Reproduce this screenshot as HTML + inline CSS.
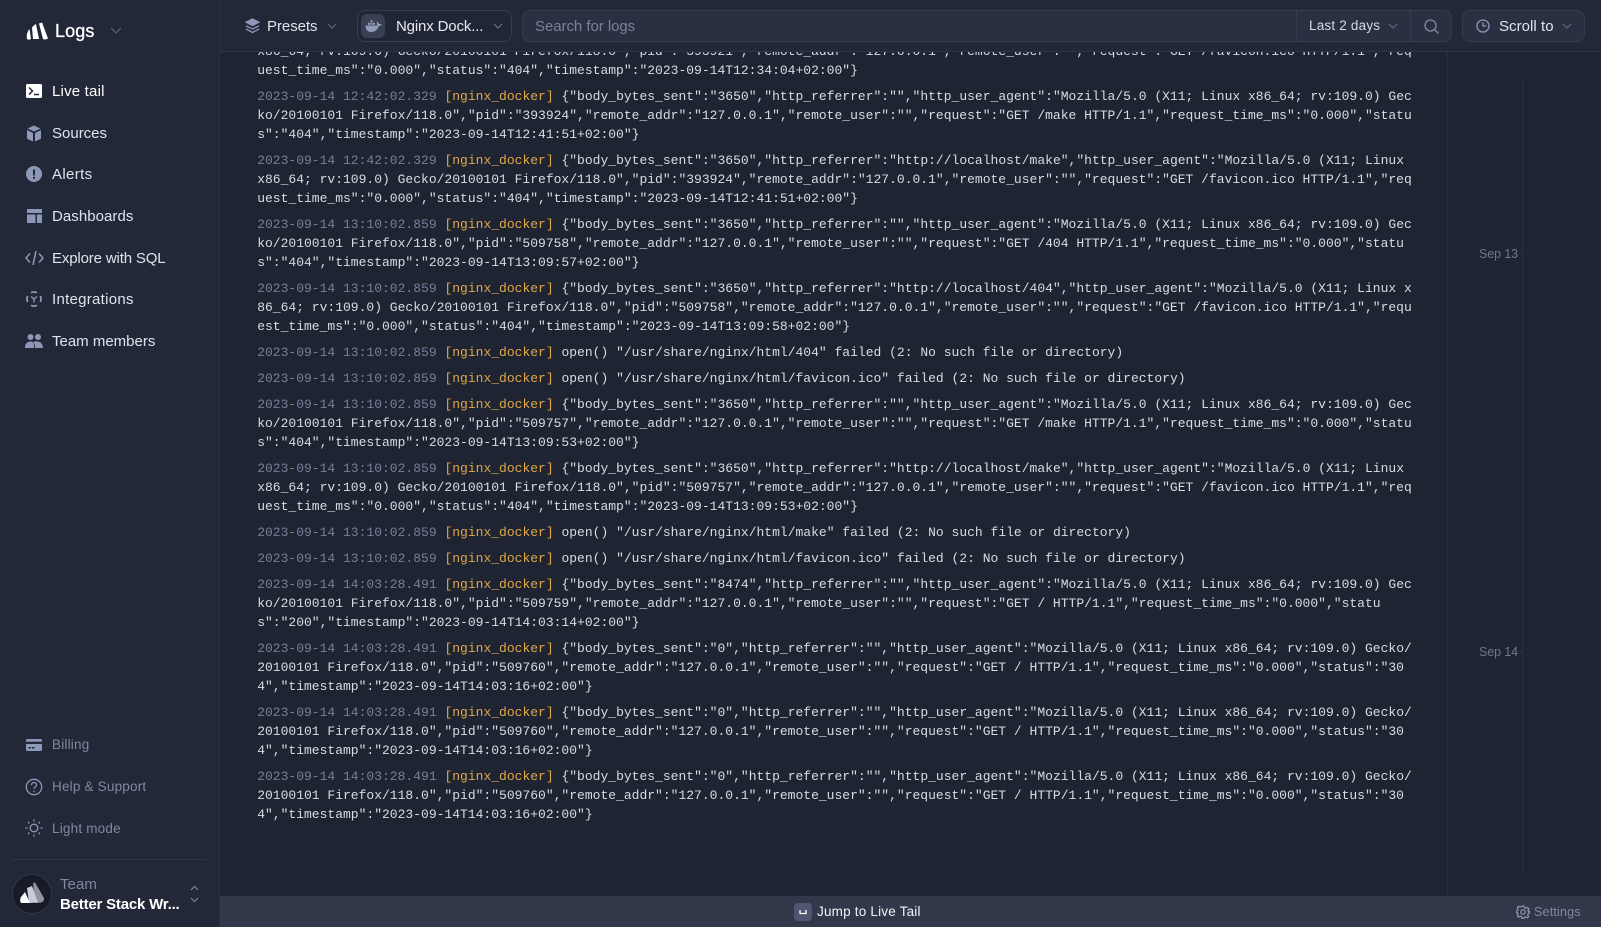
<!DOCTYPE html>
<html><head><meta charset="utf-8"><style>
*{box-sizing:border-box}
html,body{margin:0;padding:0;width:1601px;height:927px;overflow:hidden;background:#1f2432;font-family:"Liberation Sans",sans-serif}
.a{position:absolute;white-space:nowrap}
#side{position:absolute;left:0;top:0;width:220px;height:927px;background:#232838;border-right:1px solid #2b3142}
#head{position:absolute;left:220px;top:0;width:1381px;height:52px;background:#232838;border-bottom:1px solid #2e3445;z-index:3}
#log{position:absolute;left:257.2px;top:42px;font:13px/19px "Liberation Mono",monospace;color:#d8dce5;white-space:pre}
.e{margin-bottom:7px}
.t{color:#767f99}.n{color:#dfa64c}
.nav{position:absolute;left:52px;font-size:15px;line-height:20px;color:#dfe3ec;white-space:nowrap}
.sub{position:absolute;left:52px;font-size:13.5px;line-height:20px;color:#7f88a3;letter-spacing:.2px;white-space:nowrap}
svg{position:absolute;display:block}
.box{position:absolute;top:10px;height:32px;border:1px solid #353c50;border-radius:8px}
</style></head><body>
<div id="side">
<svg style="left:26px;top:21px" width="24" height="20" viewBox="0 0 24 20" fill="#fff"><path d="M1 18c-.8-4 .4-7.500 2.500-10l1.500 10c-1.500.8-3 .8-4 0z"/><path d="M7 18L6 6.500c1-1.500 2.500-2.500 4-3.500l3 15z" /><path d="M13 2.500l3-1 6 16c-1.500 1-3.500 1.300-5 .5z"/></svg>
<div class="a" style="left:55px;top:19px;font-size:18px;line-height:24px;color:#fff;letter-spacing:.1px;-webkit-text-stroke:.3px #fff">Logs</div>
<svg style="left:110px;top:26px" width="12" height="10" viewBox="0 0 12 10" fill="none" stroke="#565e75" stroke-width="1.300"><path d="M1 2l5 5 5-5"/></svg>

<svg style="left:26px;top:84px" width="16" height="14" viewBox="0 0 16 14"><rect width="16" height="14" rx="1.500" fill="#fff"/><path d="M3 3.500l3.500 3.500L3 10.500" fill="none" stroke="#232838" stroke-width="1.500"/><path d="M8 10.500h5" stroke="#232838" stroke-width="1.500"/></svg>
<div class="nav" style="top:82px;color:#fff;letter-spacing:.2px">Live tail</div>
<svg style="left:26px;top:125px" width="16" height="17" viewBox="0 0 16 17" fill="#8d98b8"><path d="M8 0.500l6.500 3L8 6.500 1.500 3.500z"/><path d="M1 5l6 3v8.500l-5-2.200c-.6-.3-1-.8-1-1.500z"/><path d="M15 5l-6 3v8.500l5-2.200c.6-.3 1-.8 1-1.500z"/></svg>
<div class="nav" style="top:124px;letter-spacing:0">Sources</div>
<svg style="left:26px;top:166px" width="16" height="16" viewBox="0 0 16 16"><circle cx="8" cy="8" r="8" fill="#8d98b8"/><rect x="7" y="3.500" width="2" height="6" fill="#232838"/><rect x="7" y="10.800" width="2" height="2" fill="#232838"/></svg>
<div class="nav" style="top:165px;letter-spacing:.35px">Alerts</div>
<svg style="left:27px;top:209px" width="15" height="14" viewBox="0 0 15 14" fill="#8d98b8"><rect width="15" height="4"/><rect y="5.500" width="8.500" height="8.500"/><rect x="10" y="5.500" width="5" height="8.500"/></svg>
<div class="nav" style="top:207px;letter-spacing:.05px">Dashboards</div>
<svg style="left:25px;top:250px" width="19" height="16" viewBox="0 0 19 16" fill="none" stroke="#8d98b8" stroke-width="1.500"><path d="M5 3.500L1 8l4 4.500M14 3.500L18 8l-4 4.500M11 1L8 15"/></svg>
<div class="nav" style="top:249px;letter-spacing:-.15px">Explore with SQL</div>
<svg style="left:26px;top:291px" width="16" height="16" viewBox="0 0 16 16" fill="none" stroke="#8d98b8" stroke-width="1.800"><path d="M5.040 1.660A7 7 0 0 1 10.960 1.660M14.340 5.040A7 7 0 0 1 14.340 10.960M10.960 14.340A7 7 0 0 1 5.040 14.340M1.660 10.960A7 7 0 0 1 1.660 5.040"/><path d="M5 5.500l3 2.500 3-2.500M8 8v3.500" stroke-width="1.400"/></svg>
<div class="nav" style="top:290px;letter-spacing:.28px">Integrations</div>
<svg style="left:25px;top:334px" width="18" height="14" viewBox="0 0 18 14" fill="#8d98b8"><circle cx="5.500" cy="3" r="3"/><circle cx="13" cy="3" r="3"/><path d="M0 14c0-4 2-6.500 5.500-6.500S9 10 9 14z"/><path d="M10 14c0-2.500-.5-4.500-1.800-6 1.300-.5 3-.8 4.800-.5 3 .4 5 3 5 6.500z"/></svg>
<div class="nav" style="top:332px;letter-spacing:0">Team members</div>

<svg style="left:26px;top:739px" width="16" height="12" viewBox="0 0 16 12"><rect width="16" height="12" rx="1.500" fill="#8d98b8"/><rect y="2.700" width="16" height="2.300" fill="#232838"/><rect x="2.500" y="8" width="2.500" height="1.500" fill="#232838"/><rect x="6" y="8" width="2.500" height="1.500" fill="#232838"/></svg>
<div class="sub" style="top:735px">Billing</div>
<svg style="left:25px;top:778px" width="18" height="18" viewBox="0 0 18 18" fill="none" stroke="#8d98b8" stroke-width="1.300"><circle cx="9" cy="9" r="7.700"/><path d="M6.500 7c0-1.500 1.100-2.500 2.500-2.500S11.500 5.500 11.500 7c0 1.800-2.500 2-2.500 3.800"/><path d="M9 12.500v1.300"/></svg>
<div class="sub" style="top:777px">Help &amp; Support</div>
<svg style="left:25px;top:819px" width="18" height="18" viewBox="0 0 18 18" fill="none" stroke="#8d98b8" stroke-width="1.300"><circle cx="9" cy="9" r="3.800"/><path d="M9 .5v2M9 15.500v2M.5 9h2M15.500 9h2M3 3l1.400 1.400M13.600 13.600L15 15M3 15l1.400-1.400M13.600 4.400L15 3"/></svg>
<div class="sub" style="top:819px">Light mode</div>

<div style="position:absolute;left:12px;top:859px;width:195px;height:1px;background:#2e3445"></div>
<svg style="left:12px;top:874px" width="40" height="40" viewBox="0 0 40 40"><circle cx="20" cy="20" r="19.500" fill="#171b28" stroke="#30364a"/><path d="M21 9l2-.5 9 15.500c.5 2-1 4-3 4.500l-6 .5z" fill="#8f94a3"/><path d="M15 14l5-2 6 16.500-9 .5z" fill="#c9ccd6"/><path d="M9 23l4-5 5 11H10c-2 0-2.500-3-1-6z" fill="#fff"/></svg>
<div class="a" style="left:60px;top:875px;font-size:15px;line-height:20px;color:#7f88a3;letter-spacing:.05px">Team</div>
<div class="a" style="left:60px;top:895px;font-size:15px;line-height:20px;color:#fff;font-weight:700;letter-spacing:-.2px">Better Stack Wr...</div>
<svg style="left:190px;top:885px" width="9" height="18" viewBox="0 0 9 18" fill="none" stroke="#7f88a3" stroke-width="1.100"><path d="M1 5l3.500-3.500L8 5M1 13l3.500 3.500L8 13"/></svg>
</div>

<div id="log"><div class="e">x86_64; rv:109.0) Gecko/20100101 Firefox/118.0","pid":"393921","remote_addr":"127.0.0.1","remote_user":"","request":"GET /favicon.ico HTTP/1.1","req
uest_time_ms":"0.000","status":"404","timestamp":"2023-09-14T12:34:04+02:00"}</div><div class="e"><span class="t">2023-09-14 12:42:02.329</span> <span class="n">[nginx_docker]</span> {"body_bytes_sent":"3650","http_referrer":"","http_user_agent":"Mozilla/5.0 (X11; Linux x86_64; rv:109.0) Gec
ko/20100101 Firefox/118.0","pid":"393924","remote_addr":"127.0.0.1","remote_user":"","request":"GET /make HTTP/1.1","request_time_ms":"0.000","statu
s":"404","timestamp":"2023-09-14T12:41:51+02:00"}</div><div class="e"><span class="t">2023-09-14 12:42:02.329</span> <span class="n">[nginx_docker]</span> {"body_bytes_sent":"3650","http_referrer":"http://localhost/make","http_user_agent":"Mozilla/5.0 (X11; Linux
x86_64; rv:109.0) Gecko/20100101 Firefox/118.0","pid":"393924","remote_addr":"127.0.0.1","remote_user":"","request":"GET /favicon.ico HTTP/1.1","req
uest_time_ms":"0.000","status":"404","timestamp":"2023-09-14T12:41:51+02:00"}</div><div class="e"><span class="t">2023-09-14 13:10:02.859</span> <span class="n">[nginx_docker]</span> {"body_bytes_sent":"3650","http_referrer":"","http_user_agent":"Mozilla/5.0 (X11; Linux x86_64; rv:109.0) Gec
ko/20100101 Firefox/118.0","pid":"509758","remote_addr":"127.0.0.1","remote_user":"","request":"GET /404 HTTP/1.1","request_time_ms":"0.000","statu
s":"404","timestamp":"2023-09-14T13:09:57+02:00"}</div><div class="e"><span class="t">2023-09-14 13:10:02.859</span> <span class="n">[nginx_docker]</span> {"body_bytes_sent":"3650","http_referrer":"http://localhost/404","http_user_agent":"Mozilla/5.0 (X11; Linux x
86_64; rv:109.0) Gecko/20100101 Firefox/118.0","pid":"509758","remote_addr":"127.0.0.1","remote_user":"","request":"GET /favicon.ico HTTP/1.1","requ
est_time_ms":"0.000","status":"404","timestamp":"2023-09-14T13:09:58+02:00"}</div><div class="e"><span class="t">2023-09-14 13:10:02.859</span> <span class="n">[nginx_docker]</span> open() "/usr/share/nginx/html/404" failed (2: No such file or directory)</div><div class="e"><span class="t">2023-09-14 13:10:02.859</span> <span class="n">[nginx_docker]</span> open() "/usr/share/nginx/html/favicon.ico" failed (2: No such file or directory)</div><div class="e"><span class="t">2023-09-14 13:10:02.859</span> <span class="n">[nginx_docker]</span> {"body_bytes_sent":"3650","http_referrer":"","http_user_agent":"Mozilla/5.0 (X11; Linux x86_64; rv:109.0) Gec
ko/20100101 Firefox/118.0","pid":"509757","remote_addr":"127.0.0.1","remote_user":"","request":"GET /make HTTP/1.1","request_time_ms":"0.000","statu
s":"404","timestamp":"2023-09-14T13:09:53+02:00"}</div><div class="e"><span class="t">2023-09-14 13:10:02.859</span> <span class="n">[nginx_docker]</span> {"body_bytes_sent":"3650","http_referrer":"http://localhost/make","http_user_agent":"Mozilla/5.0 (X11; Linux
x86_64; rv:109.0) Gecko/20100101 Firefox/118.0","pid":"509757","remote_addr":"127.0.0.1","remote_user":"","request":"GET /favicon.ico HTTP/1.1","req
uest_time_ms":"0.000","status":"404","timestamp":"2023-09-14T13:09:53+02:00"}</div><div class="e"><span class="t">2023-09-14 13:10:02.859</span> <span class="n">[nginx_docker]</span> open() "/usr/share/nginx/html/make" failed (2: No such file or directory)</div><div class="e"><span class="t">2023-09-14 13:10:02.859</span> <span class="n">[nginx_docker]</span> open() "/usr/share/nginx/html/favicon.ico" failed (2: No such file or directory)</div><div class="e"><span class="t">2023-09-14 14:03:28.491</span> <span class="n">[nginx_docker]</span> {"body_bytes_sent":"8474","http_referrer":"","http_user_agent":"Mozilla/5.0 (X11; Linux x86_64; rv:109.0) Gec
ko/20100101 Firefox/118.0","pid":"509759","remote_addr":"127.0.0.1","remote_user":"","request":"GET / HTTP/1.1","request_time_ms":"0.000","statu
s":"200","timestamp":"2023-09-14T14:03:14+02:00"}</div><div class="e"><span class="t">2023-09-14 14:03:28.491</span> <span class="n">[nginx_docker]</span> {"body_bytes_sent":"0","http_referrer":"","http_user_agent":"Mozilla/5.0 (X11; Linux x86_64; rv:109.0) Gecko/
20100101 Firefox/118.0","pid":"509760","remote_addr":"127.0.0.1","remote_user":"","request":"GET / HTTP/1.1","request_time_ms":"0.000","status":"30
4","timestamp":"2023-09-14T14:03:16+02:00"}</div><div class="e"><span class="t">2023-09-14 14:03:28.491</span> <span class="n">[nginx_docker]</span> {"body_bytes_sent":"0","http_referrer":"","http_user_agent":"Mozilla/5.0 (X11; Linux x86_64; rv:109.0) Gecko/
20100101 Firefox/118.0","pid":"509760","remote_addr":"127.0.0.1","remote_user":"","request":"GET / HTTP/1.1","request_time_ms":"0.000","status":"30
4","timestamp":"2023-09-14T14:03:16+02:00"}</div><div class="e"><span class="t">2023-09-14 14:03:28.491</span> <span class="n">[nginx_docker]</span> {"body_bytes_sent":"0","http_referrer":"","http_user_agent":"Mozilla/5.0 (X11; Linux x86_64; rv:109.0) Gecko/
20100101 Firefox/118.0","pid":"509760","remote_addr":"127.0.0.1","remote_user":"","request":"GET / HTTP/1.1","request_time_ms":"0.000","status":"30
4","timestamp":"2023-09-14T14:03:16+02:00"}</div></div>

<div style="position:absolute;left:1447px;top:52px;width:1px;height:844px;background:#2a3040"></div>
<div style="position:absolute;left:1522px;top:76px;width:1px;height:796px;background:#2a3040"></div>
<div class="a" style="left:1479px;top:245px;font-size:12.500px;line-height:18px;color:#6f7893;letter-spacing:-.1px">Sep 13</div>
<div style="position:absolute;left:1519px;top:253px;width:3px;height:1px;background:#2f3546"></div>
<div class="a" style="left:1479px;top:643px;font-size:12.500px;line-height:18px;color:#6f7893;letter-spacing:-.1px">Sep 14</div>
<div style="position:absolute;left:1519px;top:651px;width:3px;height:1px;background:#2f3546"></div>

<div id="head"></div>
<div style="position:absolute;left:0;top:0;width:1601px;height:52px;z-index:4">
<svg style="left:245px;top:18px" width="15" height="16" viewBox="0 0 15 16" fill="none" stroke="#8d98b8" stroke-width="1.300"><path d="M7.500 1L14 4.200 7.500 7.500 1 4.200z" fill="#8d98b8"/><path d="M1 7.800l6.500 3.200L14 7.800M1 11l6.500 3.500L14 11"/></svg>
<div class="a" style="left:267px;top:17px;font-size:15px;line-height:20px;color:#dfe3ec;letter-spacing:-.05px">Presets</div>
<svg style="left:327px;top:23px" width="10" height="7" viewBox="0 0 10 7" fill="none" stroke="#5f677e" stroke-width="1.200"><path d="M1 1l4 4 4-4"/></svg>

<div class="box" style="left:357px;width:155px;background:#212636"></div>
<div style="position:absolute;left:361px;top:14px;width:24px;height:24px;border-radius:6px;background:#3a4054"></div>
<svg style="left:365px;top:19px" width="17" height="14" viewBox="0 0 17 14" fill="#929dbb"><path d="M0.500 6.500h11.500c.3-1 .2-2-.5-3l1-.7c.8.600 1.300 1.400 1.400 2.300.8-.3 1.700-.2 2.600.300-.5 1.200-1.500 1.700-2.800 1.700C12.700 10.500 10 13 6 13 2.500 13 .6 10.500.5 6.500z"/><rect x="3" y="3.800" width="2" height="2"/><rect x="5.500" y="3.800" width="2" height="2"/><rect x="8" y="3.800" width="2" height="2"/><rect x="5.500" y="1.200" width="2" height="2"/></svg>
<div class="a" style="left:396px;top:17px;font-size:15px;line-height:20px;color:#e6e9f0;letter-spacing:-.15px">Nginx Dock...</div>
<svg style="left:493px;top:23px" width="10" height="7" viewBox="0 0 10 7" fill="none" stroke="#6a7289" stroke-width="1.200"><path d="M1 1l4 4 4-4"/></svg>

<div class="box" style="left:522px;width:930px;background:#2a3041"></div>
<div class="a" style="left:535px;top:17px;font-size:15px;line-height:20px;color:#78819c;letter-spacing:-.05px">Search for logs</div>
<div style="position:absolute;left:1296px;top:10px;width:1px;height:32px;background:#353c50"></div>
<div style="position:absolute;left:1410px;top:10px;width:1px;height:32px;background:#353c50"></div>
<div class="a" style="left:1309px;top:16px;font-size:13.500px;line-height:20px;color:#d5d9e2;letter-spacing:.2px">Last 2 days</div>
<svg style="left:1388px;top:23px" width="10" height="7" viewBox="0 0 10 7" fill="none" stroke="#5f677e" stroke-width="1.200"><path d="M1 1l4 4 4-4"/></svg>
<svg style="left:1424px;top:19px" width="15" height="15" viewBox="0 0 15 15" fill="none" stroke="#7f88a3" stroke-width="1.300"><circle cx="6.500" cy="6.500" r="5.500"/><path d="M10.500 10.500L14.500 14.500"/></svg>

<div class="box" style="left:1462px;width:123px;background:#2a3041"></div>
<svg style="left:1476px;top:19px" width="14" height="14" viewBox="0 0 14 14" fill="none" stroke="#8d98b8" stroke-width="1.300"><circle cx="7" cy="7" r="6"/><path d="M7 3.200V7h3.300"/></svg>
<div class="a" style="left:1499px;top:17px;font-size:15px;line-height:20px;color:#dfe3ec;letter-spacing:.05px">Scroll to</div>
<svg style="left:1562px;top:23px" width="10" height="7" viewBox="0 0 10 7" fill="none" stroke="#5f677e" stroke-width="1.200"><path d="M1 1l4 4 4-4"/></svg>
</div>

<div style="position:absolute;left:220px;top:896px;width:1381px;height:31px;background:#323849"></div>
<div style="position:absolute;left:794px;top:903px;width:18px;height:18px;border-radius:4px;background:#4f5770"></div>
<svg style="left:799px;top:909px" width="8" height="6" viewBox="0 0 8 6" fill="none" stroke="#fff" stroke-width="1.300"><path d="M1 1v3.500h6V1"/></svg>
<div class="a" style="left:817px;top:902px;font-size:13.500px;line-height:20px;color:#f0f2f6;letter-spacing:.2px">Jump to Live Tail</div>
<svg style="left:1516px;top:905px" width="14" height="14" viewBox="0 0 14 14" fill="none" stroke="#8d98b8" stroke-width="1.200"><circle cx="7" cy="7" r="2.200"/><path d="M6 1h2l.4 1.700 1.500.6 1.500-.9 1.400 1.400-.9 1.500.6 1.500L14 6v2l-1.700.4-.6 1.500.9 1.500-1.400 1.400-1.500-.9-1.500.6L8 13.500H6l-.4-1.700-1.500-.6-1.500.9-1.400-1.400.9-1.500-.6-1.500L0 8V6l1.500-.4.600-1.500-.9-1.500 1.400-1.400 1.500.9 1.500-.6z"/></svg>
<div class="a" style="left:1534px;top:902px;font-size:12.500px;line-height:20px;color:#8089a3;letter-spacing:.2px">Settings</div>
</body></html>
